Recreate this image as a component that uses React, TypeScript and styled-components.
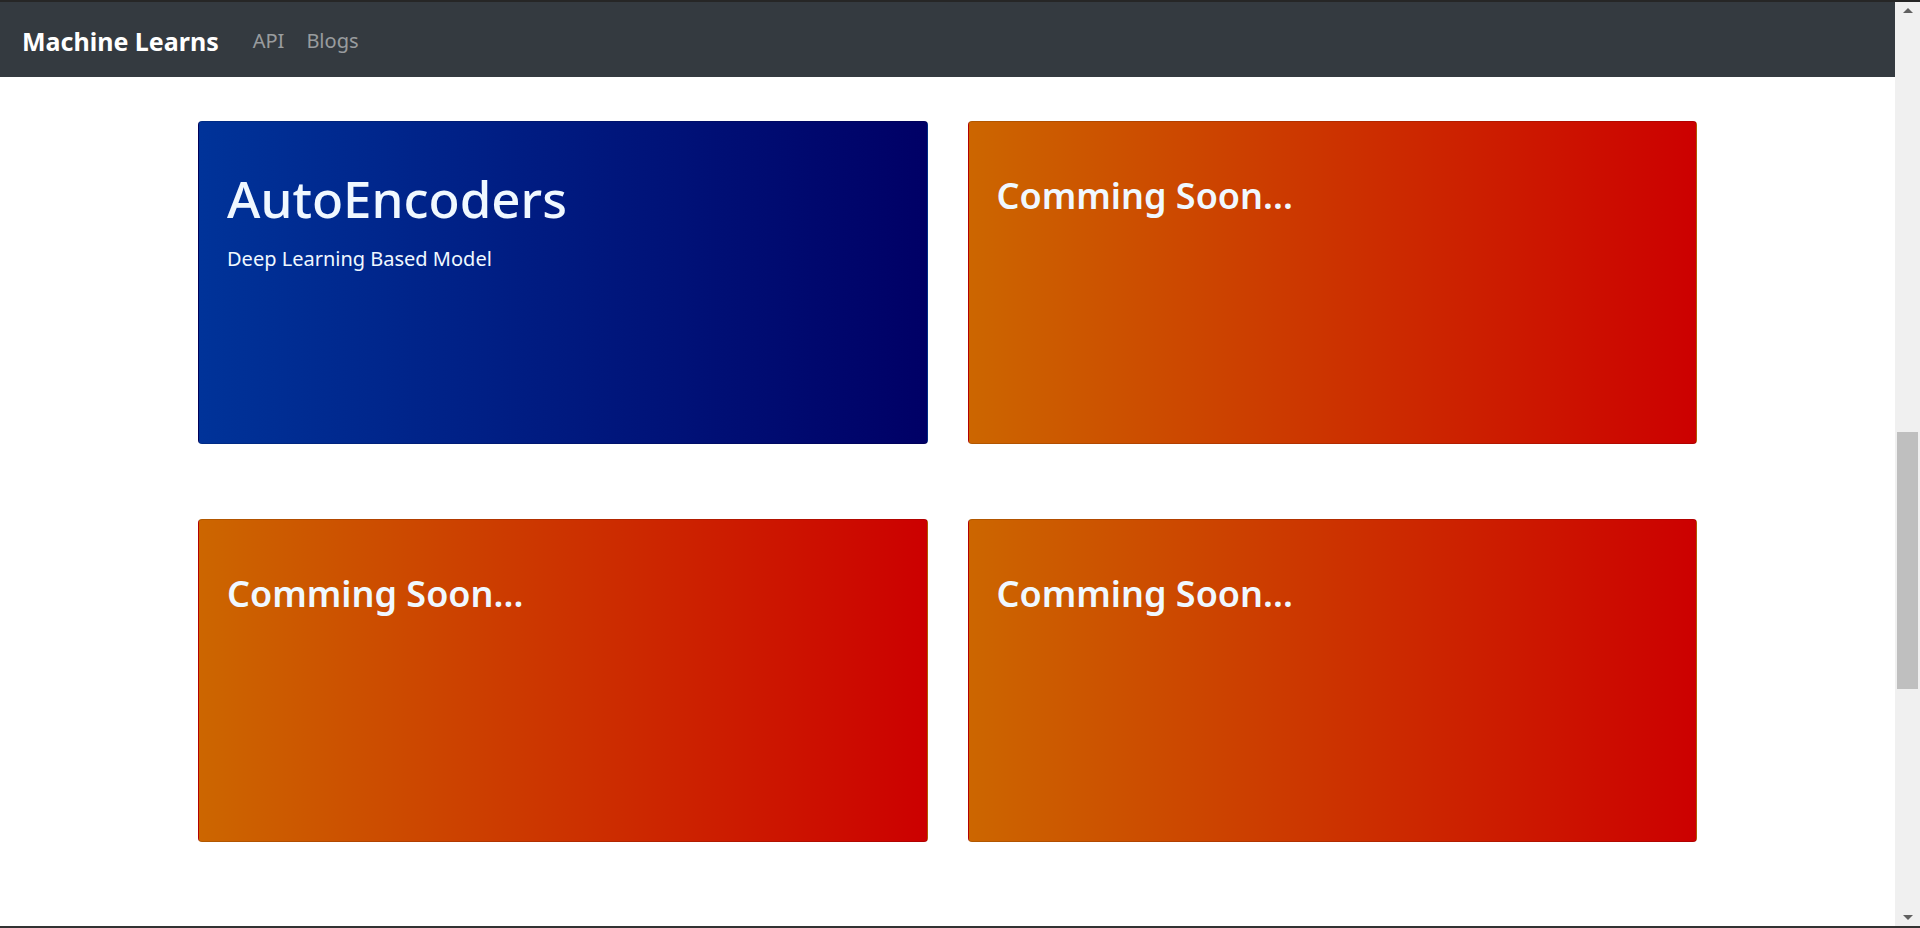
import styled, { createGlobalStyle } from 'styled-components';

const GlobalStyle = createGlobalStyle`
  html, body {
    margin: 0;
    padding: 0;
    background: #ffffff;
    font-family: 'Segoe UI', 'Noto Sans', 'Open Sans', sans-serif;
    overflow: hidden;
  }
`;

const Frame = styled.div`
  display: flex;
  height: 100vh;
  box-sizing: border-box;
  border-top: 2px solid #262626;
  border-bottom: 2px solid #333333;
`;

const Page = styled.div`
  flex: 1;
  min-width: 0;
  overflow: hidden;
`;

const Navbar = styled.nav`
  display: flex;
  align-items: center;
  height: 75px;
  padding: 2px 22px 0;
  box-sizing: border-box;
  background: #343a40;
`;

const Brand = styled.a`
  margin-right: 23px;
  color: #ffffff;
  font-size: 25px;
  font-weight: 700;
  text-decoration: none;
`;

const NavLink = styled.a`
  padding: 0 11px;
  color: rgba(255, 255, 255, 0.5);
  font-size: 20px;
  text-decoration: none;
`;

const Main = styled.main`
  display: grid;
  grid-template-columns: 1fr 1fr;
  column-gap: 40px;
  row-gap: 75px;
  max-width: 1499px;
  margin: 0 auto;
  padding: 44px 0;
`;

const Card = styled.div<{ $tone: 'blue' | 'orange' }>`
  height: 323px;
  box-sizing: border-box;
  padding: 46px 28px;
  border: 1px solid rgba(0, 0, 0, 0.125);
  border-radius: 4px;
  color: aliceblue;
  background: ${(p) =>
    p.$tone === 'blue'
      ? 'linear-gradient(to right, #003399, #000066)'
      : 'linear-gradient(to right, #cc6600, #cc0000)'};
`;

const Title = styled.h1`
  margin: 0 0 15px;
  font-size: 51px;
  font-weight: 500;
  line-height: 1.2;
`;

const Subtitle = styled.p`
  margin: 0;
  font-size: 20px;
  line-height: 1.5;
`;

const SoonTitle = styled.h2`
  margin: 0;
  font-size: 36px;
  font-weight: 600;
  line-height: 1.55;
`;

const ScrollRail = styled.div`
  display: flex;
  flex-direction: column;
  width: 25px;
  background: #f0f0f0;
`;

const ArrowButton = styled.div<{ $dir: 'up' | 'down' }>`
  display: flex;
  align-items: center;
  justify-content: center;
  height: 17px;

  &::after {
    content: '';
    border-left: 5px solid transparent;
    border-right: 5px solid transparent;
    ${(p) =>
      p.$dir === 'up'
        ? 'border-bottom: 5px solid #606060;'
        : 'border-top: 5px solid #606060;'}
  }
`;

const Track = styled.div`
  flex: 1;
  padding: 0 2px;
`;

const Thumb = styled.div`
  background: #bfbfbf;
`;

type Model = { name?: string; kind?: string };

const models: Model[] = [
  { name: 'AutoEncoders', kind: 'Deep Learning Based Model' },
  {},
  {},
  {},
];

// page scroll state shown by the rail
const docHeight = 3230;
const scrollTop = 1500;
const viewHeight = 928;
const trackHeight = 890;

export default function App() {
  const thumbTop = Math.round((scrollTop / docHeight) * trackHeight);
  const thumbSize = Math.round((viewHeight / docHeight) * trackHeight) + 1;

  return (
    <>
      <GlobalStyle />
      <Frame>
        <Page>
          <Navbar>
            <Brand href='#'>Machine Learns</Brand>
            <NavLink href='#'>API</NavLink>
            <NavLink href='#'>Blogs</NavLink>
          </Navbar>
          <Main>
            {models.map((m, i) =>
              m.name ? (
                <Card key={i} $tone='blue'>
                  <Title>{m.name}</Title>
                  <Subtitle>{m.kind}</Subtitle>
                </Card>
              ) : (
                <Card key={i} $tone='orange'>
                  <SoonTitle>Comming Soon...</SoonTitle>
                </Card>
              )
            )}
          </Main>
        </Page>
        <ScrollRail>
          <ArrowButton $dir='up' />
          <Track>
            <Thumb style={{ marginTop: thumbTop, height: thumbSize }} />
          </Track>
          <ArrowButton $dir='down' />
        </ScrollRail>
      </Frame>
    </>
  );
}
